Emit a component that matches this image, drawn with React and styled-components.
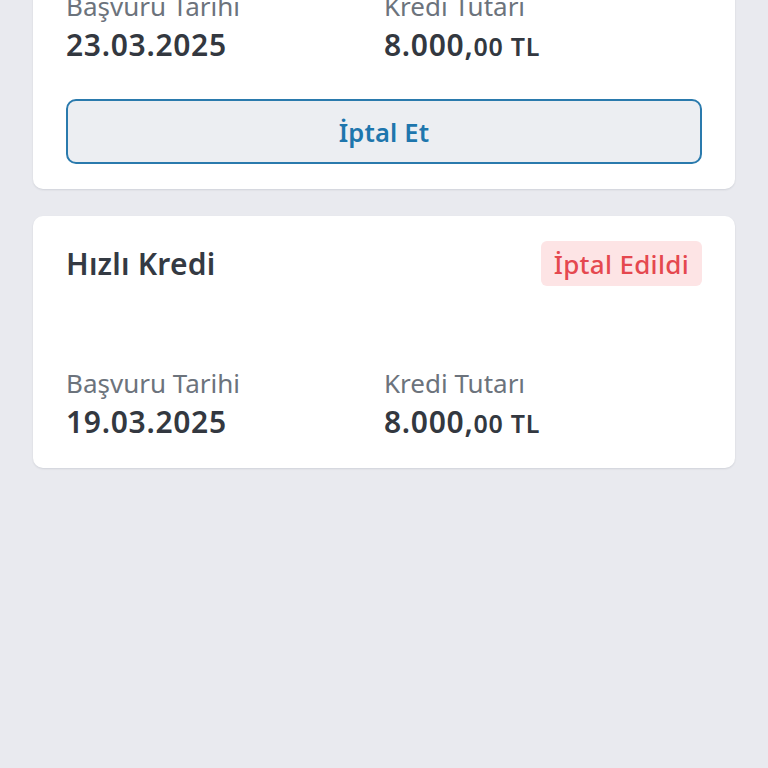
import React from "react";
import styled, { createGlobalStyle } from "styled-components";

const GlobalStyle = createGlobalStyle`
    html, body {
        margin: 0;
        padding: 0;
        background: #e9eaef;
        font-family: "Noto Sans", "Open Sans", sans-serif;
        -webkit-font-smoothing: antialiased;
    }
    * {
        box-sizing: border-box;
    }
`;

const Page = styled.div`
    min-height: 768px;
    overflow: hidden;
`;

// list is scrolled so the first card is partly off screen
const List = styled.div`
    display: flex;
    flex-direction: column;
    gap: 27px;
    padding: 0 33px;
    margin-top: -161px;
`;

const Card = styled.div`
    background: #ffffff;
    border-radius: 10px;
    padding: 25px 33px 23px;
    box-shadow: 0 1px 2px rgba(30, 40, 60, 0.12);
`;

const Header = styled.div`
    display: flex;
    align-items: center;
    justify-content: space-between;
    height: 45px;
`;

const Title = styled.h2`
    margin: 0;
    font-size: 30px;
    font-weight: 600;
    letter-spacing: 0.2px;
    color: #343a43;
`;

const Badge = styled.span`
    display: inline-flex;
    align-items: center;
    height: 45px;
    padding: 0 13px;
    border-radius: 6px;
    font-size: 26px;
    font-weight: 500;
    letter-spacing: 0.3px;
    background: ${({ tone }) => (tone === "red" ? "#fde4e5" : "#fdf1dc")};
    color: ${({ tone }) => (tone === "red" ? "#e5484f" : "#c98512")};
`;

const Fields = styled.div`
    display: grid;
    grid-template-columns: 1fr 1fr;
    margin-top: 80px;
`;

const Field = styled.div`
    display: flex;
    flex-direction: column;
`;

const Label = styled.span`
    font-size: 26px;
    line-height: 34px;
    color: #6c737c;
`;

const Value = styled.span`
    font-size: 30px;
    line-height: 44px;
    font-weight: 600;
    color: #333840;
    letter-spacing: 0.7px;

    small {
        font-size: 25px;
        font-weight: 600;
    }
`;

const CancelButton = styled.button`
    display: block;
    width: 100%;
    height: 65px;
    margin: 31px 0 2px;
    border: 2px solid #2a7aad;
    border-radius: 10px;
    background: #eceef2;
    color: #1e76ad;
    font-family: inherit;
    font-size: 25.5px;
    font-weight: 600;
    letter-spacing: 0.2px;
    cursor: pointer;
`;

const applications = [
    { title: "Hızlı Kredi", status: "Beklemede", tone: "orange", date: "23.03.2025", amount: "8.000", cents: "00", cancellable: true },
    { title: "Hızlı Kredi", status: "İptal Edildi", tone: "red", date: "19.03.2025", amount: "8.000", cents: "00", cancellable: false },
];

const ApplicationCard = ({ title, status, tone, date, amount, cents, cancellable }) => (
    <Card>
        <Header>
            <Title>{title}</Title>
            <Badge tone={tone}>{status}</Badge>
        </Header>
        <Fields>
            <Field>
                <Label>Başvuru Tarihi</Label>
                <Value>{date}</Value>
            </Field>
            <Field>
                <Label>Kredi Tutarı</Label>
                <Value>{amount},<small>{cents} TL</small></Value>
            </Field>
        </Fields>
        {cancellable && <CancelButton>İptal Et</CancelButton>}
    </Card>
);

export default function App() {
    return (
        <Page>
            <GlobalStyle />
            <List>
                {applications.map((app, i) => (
                    <ApplicationCard key={i} {...app} />
                ))}
            </List>
        </Page>
    );
}
